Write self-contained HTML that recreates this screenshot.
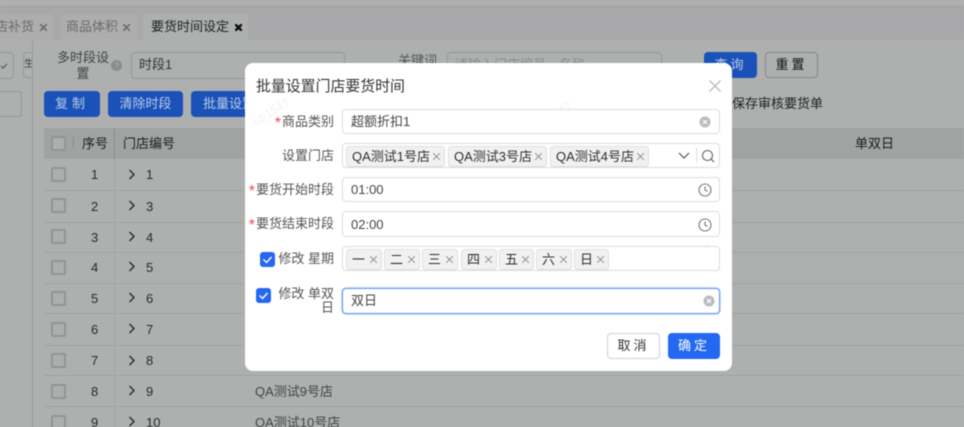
<!DOCTYPE html>
<html lang="zh"><head><meta charset="utf-8"><style>
*{box-sizing:border-box}
html{margin:0;padding:0;width:964px;height:427px;overflow:hidden;background:#aeb0b0}
body{margin:0;padding:0;width:964px;height:427px;overflow:hidden;position:relative;background:#aeb0b0;font-family:"Liberation Sans","Noto Sans CJK SC",sans-serif;font-size:13px;color:#2a2a2a}
#c{position:absolute;left:0;top:0;width:964px;height:427px;overflow:hidden}
#w{position:absolute;left:-6px;top:-6px;width:976px;height:439px;filter:blur(.5px);background:#aeb0b0}
#i{position:absolute;left:6px;top:6px;width:964px;height:427px}
.a{position:absolute;white-space:nowrap;line-height:18px}
.btn{position:absolute;border-radius:4px;background:#1a52b8;color:#b9cbe8;text-align:center;height:26px;line-height:25px;font-size:13px}
.cb{position:absolute;width:15px;height:15px;border:2px solid #939595;border-radius:2px;background:#adafaf}
.row{position:absolute;left:44px;width:920px;height:1px;background:#a1a3a3}
.input{position:absolute;left:342px;width:378px;background:#fff;border:1px solid #dcdcdc;border-radius:4px}
.tag{position:absolute;top:2px;height:21px;background:#f1f1f1;border:1px solid #e0e0e0;border-radius:3px;line-height:19px;padding-left:5px;color:#2e2e2e;font-size:13px;white-space:nowrap}
.tag i{position:absolute;right:4px;top:6px;width:7px;height:7px;background:
linear-gradient(45deg,transparent 44%,#999 44%,#999 56%,transparent 56%),
linear-gradient(-45deg,transparent 44%,#999 44%,#999 56%,transparent 56%)}
.lb{position:absolute;color:#555;line-height:18px;white-space:nowrap;text-align:right;right:630px}
.st{color:#f5455b;font-size:16px;line-height:10px;position:relative;top:2px;margin-right:1px}
.ck{position:absolute;width:15px;height:15px;background:#2468f2;border-radius:3px}
.ch{position:absolute;left:128px}
.x{position:absolute;width:7px;height:7px;background:
linear-gradient(45deg,transparent 42%,#6f6f71 42%,#6f6f71 58%,transparent 58%),
linear-gradient(-45deg,transparent 42%,#6f6f71 42%,#6f6f71 58%,transparent 58%)}
.wm{position:absolute;color:#f3f3f3;font-size:12px;transform:rotate(-30deg);white-space:nowrap}
</style></head><body><div id="c"><div id="w"><div id="i">
<div class="a" style="left:0;top:6px;width:964px;height:1px;background:#a0a0a0"></div>
<div class="a" style="left:0;top:7px;width:964px;height:33px;background:#a8a8aa"></div>
<div class="a" style="left:0;top:14px;width:53px;height:26px;background:#adadae;border-radius:0 4px 0 0"></div>
<div class="a" style="left:60px;top:14px;width:78px;height:26px;background:#adadae;border-radius:4px 4px 0 0"></div>
<div class="a" style="left:143px;top:14px;width:105px;height:27px;background:#aeb0b0;border-radius:4px 4px 0 0"></div>
<div class="a" style="left:-5px;top:18px;color:#6c6c6e">店补货</div>
<div class="x" style="left:40px;top:24px"></div>
<div class="a" style="left:66px;top:18px;color:#6c6c6e">商品体积</div>
<div class="x" style="left:123px;top:24px"></div>
<div class="a" style="left:151px;top:18px;color:#222">要货时间设定</div>
<div class="x" style="left:235px;top:24px;background:linear-gradient(45deg,transparent 38%,#111 38%,#111 62%,transparent 62%),linear-gradient(-45deg,transparent 38%,#111 38%,#111 62%,transparent 62%)"></div>
<div class="a" style="left:32px;top:41px;width:1px;height:392px;background:#989a9a"></div>
<div class="a" style="left:-6px;top:52px;width:20px;height:27px;border:1px solid #959797;border-radius:4px"></div>
<svg class="a" style="left:0;top:61px" width="10" height="10"><path d="M1 5l2 2 4-4" fill="none" stroke="#555" stroke-width="1.2"/></svg>
<div class="a" style="left:23px;top:52px;width:10px;height:26px;border:1px solid #959797;border-radius:4px 0 0 4px;border-right:0"></div>
<div class="a" style="left:24px;top:56px;font-size:10px;color:#444;width:8px;overflow:hidden">生</div>
<div class="a" style="left:-6px;top:91px;width:28px;height:26px;border:1px solid #959797;border-radius:4px"></div>
<div class="a" style="left:57px;top:50px;color:#444;line-height:16px;width:52px;text-align:center;white-space:normal">多时段设置</div>
<div class="a" style="left:111px;top:60px;width:11px;height:11px;border-radius:50%;background:#8b8d8d;color:#aeb0b0;font-size:8px;line-height:11px;text-align:center">?</div>
<div class="a" style="left:131px;top:52px;width:214px;height:27px;border:1px solid #959797;border-radius:4px"></div>
<div class="a" style="left:139px;top:56px;color:#333">时段1</div>
<div class="a" style="left:398px;top:52px;color:#555">关键词</div>
<div class="a" style="left:447px;top:52px;width:215px;height:27px;border:1px solid #959797;border-radius:4px"></div>
<div class="a" style="left:455px;top:56px;color:#8c8e8e">请输入门店编号、名称</div>
<div class="btn" style="left:704px;top:52px;width:53px;letter-spacing:3px">查询</div>
<div class="a" style="left:765px;top:52px;width:53px;height:26px;border:1px solid #858787;border-radius:4px;text-align:center;line-height:24px;color:#111;letter-spacing:3px">重置</div>
<div class="btn" style="left:44px;top:91px;width:56px;letter-spacing:4px">复制</div>
<div class="btn" style="left:108px;top:91px;width:75px">清除时段</div>
<div class="btn" style="left:191px;top:91px;width:70px;text-align:left;padding-left:12px">批量设置</div>
<div class="a" style="left:732px;top:95px;color:#222">保存审核要货单</div>
<div class="a" style="left:44px;top:128px;width:920px;height:31px;background:#a1a3a3"></div>
<div class="a" style="left:114px;top:159px;width:1px;height:274px;background:#a3a5a5"></div>
<div class="a" style="left:114px;top:128px;width:1px;height:31px;background:#8c8e8e"></div>
<div class="a" style="left:73px;top:137px;width:1px;height:11px;background:#858787"></div>
<div class="cb" style="left:51px;top:136px"></div>
<div class="a" style="left:82px;top:135px;color:#1c1c1c">序号</div>
<div class="a" style="left:123px;top:135px;color:#1c1c1c">门店编号</div>
<div class="a" style="left:855px;top:135px;color:#1c1c1c">单双日</div>
<div class="row" style="top:190px"></div><div class="row" style="top:222px"></div><div class="row" style="top:252px"></div><div class="row" style="top:283px"></div><div class="row" style="top:313px"></div><div class="row" style="top:345px"></div><div class="row" style="top:375px"></div><div class="row" style="top:406px"></div>

<div class="cb" style="left:51px;top:167px"></div><div class="a" style="left:91px;top:166px">1</div><svg class="ch" style="top:169px" width="8" height="11"><path d="M1.5 1l4.5 4.5-4.5 4.5" fill="none" stroke="#222" stroke-width="1.3"/></svg><div class="a" style="left:146px;top:166px">1</div>
<div class="cb" style="left:51px;top:198px"></div><div class="a" style="left:91px;top:198px">2</div><svg class="ch" style="top:200px" width="8" height="11"><path d="M1.5 1l4.5 4.5-4.5 4.5" fill="none" stroke="#222" stroke-width="1.3"/></svg><div class="a" style="left:146px;top:198px">3</div>
<div class="cb" style="left:51px;top:229px"></div><div class="a" style="left:91px;top:229px">3</div><svg class="ch" style="top:231px" width="8" height="11"><path d="M1.5 1l4.5 4.5-4.5 4.5" fill="none" stroke="#222" stroke-width="1.3"/></svg><div class="a" style="left:146px;top:229px">4</div>
<div class="cb" style="left:51px;top:260px"></div><div class="a" style="left:91px;top:259px">4</div><svg class="ch" style="top:261px" width="8" height="11"><path d="M1.5 1l4.5 4.5-4.5 4.5" fill="none" stroke="#222" stroke-width="1.3"/></svg><div class="a" style="left:146px;top:259px">5</div>
<div class="cb" style="left:51px;top:291px"></div><div class="a" style="left:91px;top:290px">5</div><svg class="ch" style="top:292px" width="8" height="11"><path d="M1.5 1l4.5 4.5-4.5 4.5" fill="none" stroke="#222" stroke-width="1.3"/></svg><div class="a" style="left:146px;top:290px">6</div>
<div class="cb" style="left:51px;top:322px"></div><div class="a" style="left:91px;top:321px">6</div><svg class="ch" style="top:323px" width="8" height="11"><path d="M1.5 1l4.5 4.5-4.5 4.5" fill="none" stroke="#222" stroke-width="1.3"/></svg><div class="a" style="left:146px;top:321px">7</div>
<div class="cb" style="left:51px;top:353px"></div><div class="a" style="left:91px;top:352px">7</div><svg class="ch" style="top:355px" width="8" height="11"><path d="M1.5 1l4.5 4.5-4.5 4.5" fill="none" stroke="#222" stroke-width="1.3"/></svg><div class="a" style="left:146px;top:352px">8</div>
<div class="cb" style="left:51px;top:384px"></div><div class="a" style="left:91px;top:383px">8</div><svg class="ch" style="top:385px" width="8" height="11"><path d="M1.5 1l4.5 4.5-4.5 4.5" fill="none" stroke="#222" stroke-width="1.3"/></svg><div class="a" style="left:146px;top:383px">9</div><div class="a" style="left:255px;top:383px;color:#444">QA测试9号店</div>
<div class="cb" style="left:51px;top:415px"></div><div class="a" style="left:91px;top:414px">9</div><svg class="ch" style="top:416px" width="8" height="11"><path d="M1.5 1l4.5 4.5-4.5 4.5" fill="none" stroke="#222" stroke-width="1.3"/></svg><div class="a" style="left:146px;top:414px">10</div><div class="a" style="left:255px;top:414px;color:#444">QA测试10号店</div>

<div class="a" style="left:245px;top:63px;width:487px;height:308px;background:#fff;border-radius:8px"></div>
<div class="wm" style="left:250px;top:105px">xzj1547</div>
<div class="wm" style="left:532px;top:108px">xzj1547</div>
<div class="wm" style="left:672px;top:250px">xzj1547</div>
<div class="a" style="left:256px;top:78px;font-size:14.9px;color:#333">批量设置门店要货时间</div>
<svg class="a" style="left:708px;top:79px" width="14" height="14"><path d="M1.5 1.5l11 11M12.5 1.5l-11 11" stroke="#b0b0b0" stroke-width="1.2" fill="none"/></svg>

<div class="lb" style="top:113px"><span class="st">*</span>商品类别</div>
<div class="input" style="top:109px;height:25px"><span class="a" style="left:8px;top:3px;color:#444">超额折扣1</span></div>
<svg class="a" style="left:699px;top:116px" width="12" height="12"><circle cx="6" cy="6" r="5.5" fill="#bbb"/><path d="M4 4l4 4M8 4l-4 4" stroke="#fff" stroke-width="1.2"/></svg>

<div class="lb" style="top:147px">设置门店</div>
<div class="input" style="top:143px;height:25px">
<div class="tag" style="left:3px;width:99px">QA测试1号店<i></i></div>
<div class="tag" style="left:105px;width:99px">QA测试3号店<i></i></div>
<div class="tag" style="left:207px;width:99px">QA测试4号店<i></i></div>
</div>
<svg class="a" style="left:677px;top:151px" width="14" height="10"><path d="M2 2l5 5 5-5" fill="none" stroke="#555" stroke-width="1.2"/></svg>
<div class="a" style="left:696px;top:148px;width:1px;height:15px;background:#ddd"></div>
<svg class="a" style="left:701px;top:149px" width="14" height="14"><circle cx="6.5" cy="6.5" r="5" fill="none" stroke="#666" stroke-width="1.1"/><path d="M10 10l3 3" stroke="#666" stroke-width="1.2"/></svg>

<div class="lb" style="top:181px"><span class="st">*</span>要货开始时段</div>
<div class="input" style="top:177px;height:25px"><span class="a" style="left:8px;top:3px;color:#444">01:00</span></div>
<svg class="a" style="left:698px;top:183px" width="14" height="14"><circle cx="7" cy="7" r="6" fill="none" stroke="#777" stroke-width="1.1"/><path d="M7 3.5V7l2.5 1.5" fill="none" stroke="#777" stroke-width="1.1"/></svg>

<div class="lb" style="top:215px"><span class="st">*</span>要货结束时段</div>
<div class="input" style="top:211px;height:26px"><span class="a" style="left:8px;top:4px;color:#444">02:00</span></div>
<svg class="a" style="left:698px;top:218px" width="14" height="14"><circle cx="7" cy="7" r="6" fill="none" stroke="#777" stroke-width="1.1"/><path d="M7 3.5V7l2.5 1.5" fill="none" stroke="#777" stroke-width="1.1"/></svg>

<div class="ck" style="left:260px;top:252px"></div>
<svg class="a" style="left:260px;top:252px" width="15" height="15"><path d="M3.5 7.5l3 3 5-5.5" fill="none" stroke="#fff" stroke-width="1.4"/></svg>
<div class="lb" style="top:250px">修改 星期</div>
<div class="input" style="top:246px;height:25px">
<div class="tag" style="left:3px;width:36px">一<i></i></div>
<div class="tag" style="left:41px;width:36px">二<i></i></div>
<div class="tag" style="left:79px;width:36px">三<i></i></div>
<div class="tag" style="left:118px;width:36px">四<i></i></div>
<div class="tag" style="left:156px;width:35px">五<i></i></div>
<div class="tag" style="left:193px;width:36px">六<i></i></div>
<div class="tag" style="left:231px;width:35px">日<i></i></div>
</div>

<div class="ck" style="left:256px;top:288px"></div>
<svg class="a" style="left:256px;top:288px" width="15" height="15"><path d="M3.5 7.5l3 3 5-5.5" fill="none" stroke="#fff" stroke-width="1.4"/></svg>
<div class="lb" style="top:287px;line-height:14px">修改 单双<br>日</div>
<div class="input" style="top:288px;height:26px;border:1px solid #5f94f5;box-shadow:0 0 0 1px #cfe0fc"><span class="a" style="left:8px;top:3px;color:#444">双日</span></div>
<svg class="a" style="left:703px;top:295px" width="12" height="12"><circle cx="6" cy="6" r="5.5" fill="#bbb"/><path d="M4 4l4 4M8 4l-4 4" stroke="#fff" stroke-width="1.2"/></svg>

<div class="a" style="left:607px;top:333px;width:53px;height:26px;border:1px solid #d0d0d0;border-radius:4px;text-align:center;line-height:24px;color:#333;letter-spacing:3px;background:#fff">取消</div>
<div class="a" style="left:668px;top:333px;width:52px;height:26px;background:#2468f2;border-radius:4px;text-align:center;line-height:25px;color:#fff;letter-spacing:3px">确定</div>
</div></div></div></body></html>
